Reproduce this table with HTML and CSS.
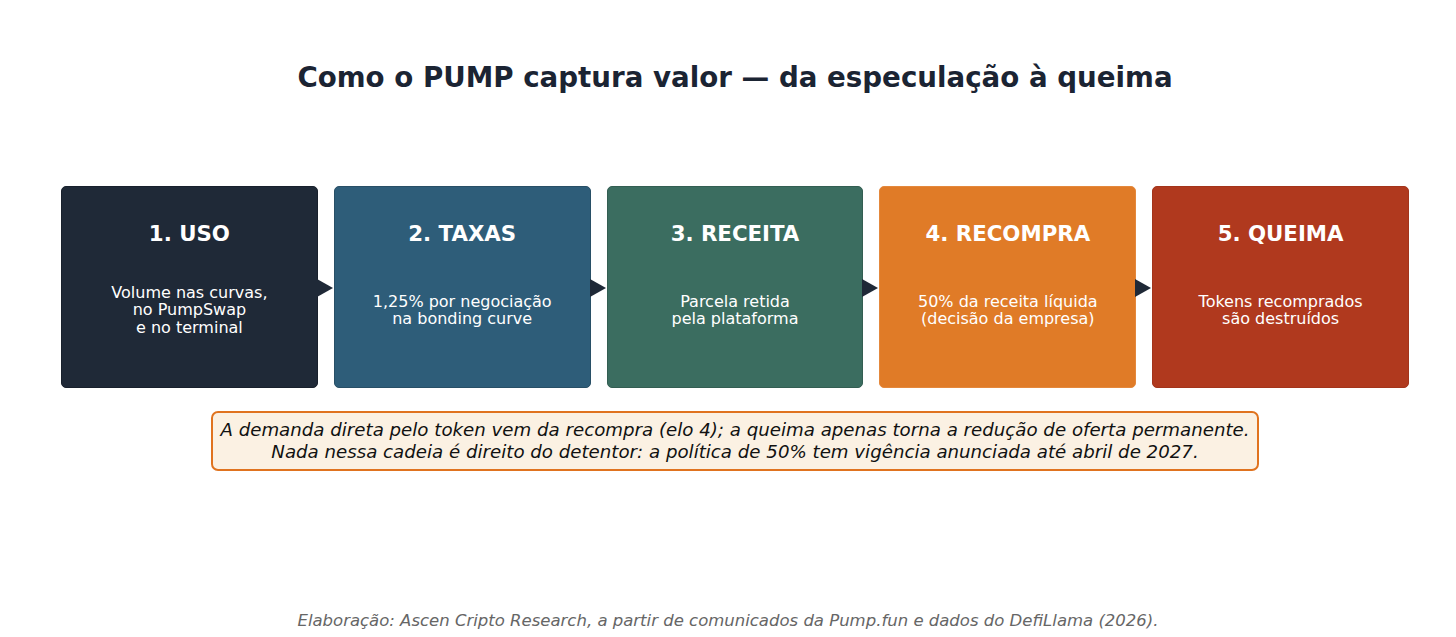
FILE: index.html
```html
<!DOCTYPE html>
<html lang="pt">
<head>
<meta charset="utf-8">
<title>Como o PUMP captura valor</title>
<link rel="stylesheet" href="styles.css">
</head>
<body>
<div class="page">
  <main class="content">
    <h1 class="title">Como o PUMP captura valor — da especulação à queima</h1>
    <div class="flow">
      <div class="step step-uso">
        <div class="step-head">1. USO</div>
        <div class="step-body">Volume nas curvas,<br>no PumpSwap<br>e no terminal</div>
      </div>
      <div class="step step-taxas">
        <div class="step-head">2. TAXAS</div>
        <div class="step-body">1,25% por negociação<br>na bonding curve</div>
      </div>
      <div class="step step-receita">
        <div class="step-head">3. RECEITA</div>
        <div class="step-body">Parcela retida<br>pela plataforma</div>
      </div>
      <div class="step step-recompra">
        <div class="step-head">4. RECOMPRA</div>
        <div class="step-body">50% da receita líquida<br>(decisão da empresa)</div>
      </div>
      <div class="step step-queima">
        <div class="step-head">5. QUEIMA</div>
        <div class="step-body">Tokens recomprados<br>são destruídos</div>
      </div>
    </div>
    <div class="note-wrap">
      <div class="note">A demanda direta pelo token vem da recompra (elo 4); a queima apenas torna a redução de oferta permanente.<br>Nada nessa cadeia é direito do detentor: a política de 50% tem vigência anunciada até abril de 2027.</div>
    </div>
  </main>
  <footer class="source">Elaboração: Ascen Cripto Research, a partir de comunicados da Pump.fun e dados do DefiLlama (2026).</footer>
</div>
</body>
</html>
```

FILE: styles.css
```css
* { box-sizing: border-box; }
html, body {
  margin: 0;
  padding: 0;
  background: #ffffff;
}
body {
  font-family: "DejaVu Sans", "Liberation Sans", sans-serif;
  width: 1456px;
  height: 637px;
  overflow: hidden;
}
.page {
  display: flex;
  flex-direction: column;
  height: 637px;
}
.content {
  margin-left: 61px;
  width: 1348px;
  display: flex;
  flex-direction: column;
}
.title {
  margin: 62px 0 0 0;
  height: 32px;
  line-height: 32px;
  font-size: 27.7px;
  font-weight: bold;
  color: #1b2433;
  text-align: center;
}
.flow {
  margin-top: 92px;
  display: flex;
  gap: 16px;
}
.step {
  position: relative;
  width: 257px;
  height: 202px;
  border-radius: 5px;
  color: #ffffff;
  display: flex;
  flex-direction: column;
  align-items: center;
}
.step:not(:last-child)::after {
  content: "";
  position: absolute;
  right: -16px;
  top: 92px;
  width: 0;
  height: 0;
  border-top: 9px solid transparent;
  border-bottom: 9px solid transparent;
  border-left: 16px solid #1f2937;
  z-index: 2;
}
.step-head {
  margin-top: 34px;
  height: 26px;
  line-height: 26px;
  font-size: 21.3px;
  font-weight: bold;
}
.step-body {
  margin-top: 23px;
  height: 80px;
  display: flex;
  align-items: center;
  justify-content: center;
  text-align: center;
  font-size: 16px;
  line-height: 17.5px;
}
.step-uso { background: #1f2937; border: 1px solid #18202c; }
.step-taxas { background: #2e5d79; border: 1px solid #284f66; }
.step-receita { background: #3b6d60; border: 1px solid #335e52; }
.step-recompra { background: #e07b27; border: 1px solid #e4883c; }
.step-queima { background: #b0391e; border: 1px solid #a3341b; }
.note-wrap {
  margin-top: 23px;
  display: flex;
  justify-content: center;
}
.note {
  width: 1048px;
  height: 60px;
  border: 2px solid #e0731f;
  border-radius: 7px;
  background: #fbf1e3;
  font-style: italic;
  font-size: 18.2px;
  line-height: 22.5px;
  color: #111111;
  text-align: center;
  display: flex;
  align-items: center;
  justify-content: center;
}
.source {
  margin-top: auto;
  margin-bottom: 6px;
  text-align: center;
  font-style: italic;
  font-size: 16.5px;
  line-height: 20px;
  color: #666666;
}
```
